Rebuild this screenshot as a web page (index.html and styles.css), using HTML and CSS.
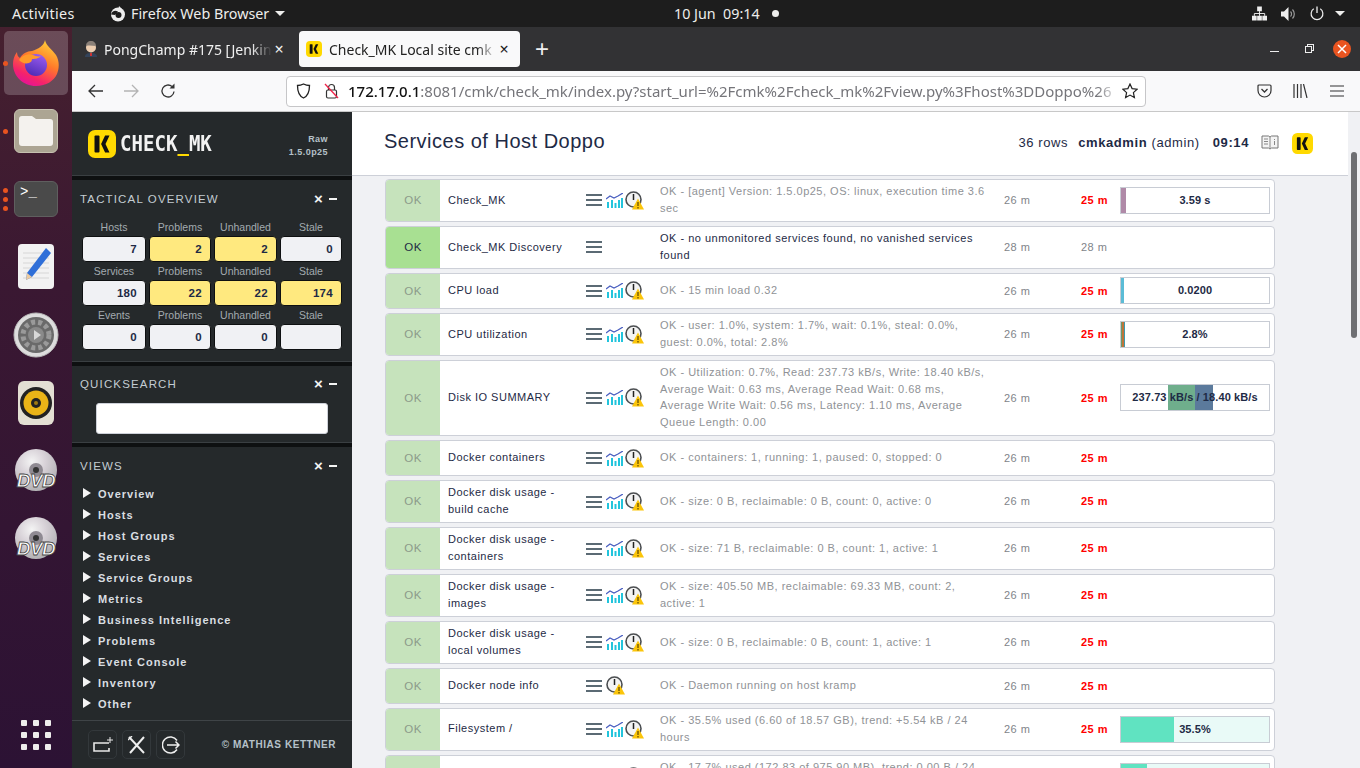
FILE: index.html
```html
<!DOCTYPE html>
<html lang="en">
<head>
    <meta charset="UTF-8">
    <title>Check_MK Local site cmk</title>
    <link rel="stylesheet" href="styles.css">
</head>
<body>
    <svg class="defs" width="0" height="0">
        <defs>
            <linearGradient id="fxBody" x1="0.8" y1="0" x2="0.3" y2="1">
                <stop offset="0" stop-color="#ffd53a"/>
                <stop offset="0.45" stop-color="#ff7a2a"/>
                <stop offset="0.8" stop-color="#f5236b"/>
                <stop offset="1" stop-color="#e3129a"/>
            </linearGradient>
            <linearGradient id="fxBall" x1="0.7" y1="0" x2="0.3" y2="1">
                <stop offset="0" stop-color="#9a5cf0"/>
                <stop offset="1" stop-color="#4d2bb5"/>
            </linearGradient>
            <radialGradient id="disc" cx="0.4" cy="0.3" r="0.8">
                <stop offset="0" stop-color="#f4f4f4"/>
                <stop offset="0.4" stop-color="#d8d2d8"/>
                <stop offset="1" stop-color="#a9a9ab"/>
            </radialGradient>
            <symbol id="ico-k" viewBox="0 0 28 28">
                <rect width="28" height="28" rx="7" fill="#ffd900"/>
                <rect x="6.5" y="5.5" width="5" height="17" rx="1" fill="#111"/>
                <path d="M21.500 5.500h-4.400l-4 8.500 4 8.500h4.400l-4-8.500z" fill="#111"/>
            </symbol>
            <symbol id="ico-menu" viewBox="0 0 16 12">
                <path d="M0 1h16M0 6h16M0 11h16" stroke="#5b6a74" stroke-width="2"/>
            </symbol>
            <symbol id="ico-graph" viewBox="0 0 17 15">
                <path d="M1 15V9h2v6zM5 15V7h2v8zM8.500 15V10h2v5zM12 15V7h2v8zM15 15V5h2v10z" fill="#22c4dc"/>
                <path d="M0 6l4-3 4 2 4-2 5-3" fill="none" stroke="#4a5fc0" stroke-width="1.300"/>
            </symbol>
            <symbol id="ico-stale" viewBox="0 0 19 19">
                <circle cx="8.500" cy="8.500" r="7.500" fill="#f4f4f4" stroke="#4c4f52" stroke-width="1.600"/>
                <path d="M8.500 3v6" stroke="#222" stroke-width="1.500"/>
                <path d="M13 7.500l6 11H7z" fill="#fbc50a"/>
                <path d="M13 11v4M13 16v1.400" stroke="#5a4400" stroke-width="1.200"/>
            </symbol>
        </defs>
    </svg>

    <div class="topbar">
        <span class="activities">Activities</span>
        <div class="appmenu">
            <svg class="appmenu-icon" width="16" height="16" viewBox="0 0 16 16"><circle cx="8" cy="8.500" r="7" fill="#eee"/><circle cx="8.500" cy="9" r="3" fill="#1d1d1d"/><path d="M9 0l3 3-4 2z" fill="#eee"/><path d="M1 8.500C2 5 5 4 8 5.500L5 9z" fill="#1d1d1d"/></svg>
            <span>Firefox Web Browser</span>
            <span class="caret"></span>
        </div>
        <div class="clock">
            <span>10 Jun&nbsp; 09:14</span>
            <span class="clock-dot"></span>
        </div>
        <div class="tray">
            <svg width="15" height="15" viewBox="0 0 16 15"><path d="M5.500 0h5v5h-5zM0 10h5v5H0zM5.500 10h5v5h-5zM11 10h5v5h-5z" fill="#eee"/><path d="M8 5v5M2.500 10V7.500h11V10" fill="none" stroke="#eee"/></svg>
            <svg width="15" height="14" viewBox="0 0 15 14"><path d="M0 4.500h3L7.500 0v14L3 9.500H0z" fill="#eee"/><path d="M9.500 4.500a3.500 3.500 0 0 1 0 5M11.500 2.500a6.500 6.500 0 0 1 0 9" fill="none" stroke="#999" stroke-width="1.200"/></svg>
            <svg width="14" height="15" viewBox="0 0 15 15"><path d="M7.500 0v7" stroke="#eee" stroke-width="1.400"/><path d="M4 2.500a6.300 6.300 0 1 0 7 0" fill="none" stroke="#eee" stroke-width="1.300"/></svg>
            <span class="caret"></span>
        </div>
    </div>

    <div class="desktop">
        <nav class="dock">
            <div class="dock-item active">
                <span class="run-dot one"></span>
                <svg width="48" height="48" viewBox="0 0 48 48">
                    <path d="M33 1c1 6 7 9 11 15 4 7 3 14 1 19-3 7-11 12-21 12C11 47 1 37 1 25c0-4 1-8 4-12 0 3 1 5 3 6 2-4 7-7 12-7 6-2 12-5 13-11z" fill="url(#fxBody)"/>
                    <circle cx="24" cy="26" r="11" fill="url(#fxBall)"/>
                    <path d="M7 21c3-5 9-7 14-5 3 1 5 2 8 1-3 3-7 3-9 3 0 2-1 3-3 4-4 1-7 0-10-3z" fill="#ff9a2a"/>
                </svg>
            </div>
            <div class="dock-item">
                <span class="run-dot one"></span>
                <div class="tile tile-files">
                    <svg width="34" height="30" viewBox="0 0 34 30"><path d="M3 0h10l4 3h14a3 3 0 0 1 3 3v21a3 3 0 0 1-3 3H3a3 3 0 0 1-3-3V3a3 3 0 0 1 3-3z" fill="#f4f2ee"/></svg>
                </div>
            </div>
            <div class="dock-item">
                <span class="run-dot three"></span>
                <span class="run-dot one"></span>
                <span class="run-dot five"></span>
                <div class="tile tile-term"><span>&gt;_</span></div>
            </div>
            <div class="dock-item">
                <svg width="38" height="46" viewBox="0 0 38 46">
                    <rect width="36" height="45" x="1" rx="4" fill="#f2f2f2"/>
                    <path d="M6 9h26M6 14h26M6 19h26M6 24h26M6 29h26M6 34h26" stroke="#d6d6d6"/>
                    <path d="M29 4l5 5-19 24-6 3 1-7z" fill="#2f6fd8"/>
                    <path d="M10 29l5 4-6 3z" fill="#eccba0"/>
                </svg>
            </div>
            <div class="dock-item">
                <svg width="46" height="46" viewBox="0 0 46 46">
                    <circle cx="23" cy="23" r="22" fill="#ddd" stroke="#bbb"/>
                    <circle cx="23" cy="23" r="18" fill="#6a6a6a"/>
                    <circle cx="23" cy="23" r="13" fill="none" stroke="#9a9a9a" stroke-width="5" stroke-dasharray="4 3"/>
                    <circle cx="23" cy="23" r="8" fill="#8a8a8a"/>
                    <path d="M21 18l7 5-7 5z" fill="#d8d8d8"/>
                </svg>
            </div>
            <div class="dock-item">
                <div class="tile tile-sound">
                    <svg width="32" height="32" viewBox="0 0 32 32">
                        <circle cx="16" cy="16" r="16" fill="#222"/>
                        <circle cx="16" cy="16" r="12.500" fill="#eab417"/>
                        <circle cx="16" cy="16" r="5" fill="#222"/>
                        <circle cx="16" cy="16" r="2" fill="#a07a10"/>
                    </svg>
                </div>
            </div>
            <div class="dock-item">
                <svg width="44" height="44" viewBox="0 0 44 44">
                    <circle cx="22" cy="21" r="21" fill="url(#disc)"/>
                    <circle cx="22" cy="21" r="7" fill="#8f8a92"/>
                    <circle cx="22" cy="21" r="3" fill="#333"/>
                    <text class="dvd-text" x="22" y="38">DVD</text>
                </svg>
            </div>
            <div class="dock-item">
                <svg width="44" height="44" viewBox="0 0 44 44">
                    <circle cx="22" cy="21" r="21" fill="url(#disc)"/>
                    <circle cx="22" cy="21" r="7" fill="#8f8a92"/>
                    <circle cx="22" cy="21" r="3" fill="#333"/>
                    <text class="dvd-text" x="22" y="38">DVD</text>
                </svg>
            </div>
            <div class="dock-apps">
                <span></span><span></span><span></span>
                <span></span><span></span><span></span>
                <span></span><span></span><span></span>
            </div>
        </nav>

        <div class="browser">
            <div class="tabbar">
                <div class="tab">
                    <svg class="tab-icon" width="14" height="16" viewBox="0 0 14 16"><path d="M1 16c0-3 2-4 6-4s6 1 6 4z" fill="#33435a"/><circle cx="7" cy="6.500" r="5" fill="#eccdb0"/><path d="M2 5c0-3 2-5 5-5s5 2 5 5c-3 0-6-1-10 0z" fill="#8a8078"/><path d="M6 12h2v3H6z" fill="#c33"/></svg>
                    <span class="tab-title">PongChamp #175 [Jenkin</span>
                    <span class="tab-close">&#215;</span>
                </div>
                <div class="tab tab-active">
                    <svg class="tab-icon-k" width="16" height="16"><use href="#ico-k"/></svg>
                    <span class="tab-title">Check_MK Local site cmk</span>
                    <span class="tab-close">&#215;</span>
                </div>
                <span class="tab-new">+</span>
                <div class="winctl">
                    <span class="win-min"></span>
                    <span class="win-max"></span>
                    <span class="win-close">
                        <svg width="10" height="10" viewBox="0 0 10 10"><path d="M1 1l8 8M9 1l-8 8" stroke="#fff" stroke-width="1.500"/></svg>
                    </span>
                </div>
            </div>
            <div class="toolbar">
                <svg class="tb-back" width="16" height="14" viewBox="0 0 16 14"><path d="M15 7H1.500M7 1L1 7l6 6" fill="none" stroke="#333" stroke-width="1.300"/></svg>
                <svg class="tb-fwd" width="16" height="14" viewBox="0 0 16 14"><path d="M1 7h13.500M9 1l6 6-6 6" fill="none" stroke="#b4b4b4" stroke-width="1.300"/></svg>
                <svg class="tb-reload" width="16" height="16" viewBox="0 0 16 16"><path d="M14 8.500A6 6 0 1 1 12 3.500" fill="none" stroke="#333" stroke-width="1.300"/><path d="M14.500 0.500v5h-5z" fill="#333"/></svg>
                <div class="urlbar">
                    <svg class="url-shield" width="15" height="16" viewBox="0 0 15 16"><path d="M7.500 1c2 1 4 1.500 6 1.500 0 6-1.500 10.500-6 12.500C3 13 1.500 8.500 1.500 2.500c2 0 4-.5 6-1.500z" fill="none" stroke="#222" stroke-width="1.300"/></svg>
                    <svg class="url-lock" width="15" height="16" viewBox="0 0 15 16"><rect x="2.500" y="7" width="10" height="8" rx="1.500" fill="none" stroke="#333" stroke-width="1.200"/><path d="M4.500 7V4.500a3 3 0 0 1 6 0V7" fill="none" stroke="#333" stroke-width="1.200"/><path d="M1 1l13 14" stroke="#f0234a" stroke-width="1.300"/></svg>
                    <span class="url-text"><b>172.17.0.1</b>:8081/cmk/check_mk/index.py?start_url=%2Fcmk%2Fcheck_mk%2Fview.py%3Fhost%3DDoppo%26</span>
                    <svg class="url-star" width="16" height="16" viewBox="0 0 16 16"><path d="M8 1l2.100 4.600 5 .6-3.700 3.400 1 5L8 12.100 3.600 14.600l1-5L.9 6.200l5-.6z" fill="none" stroke="#222" stroke-width="1.200"/></svg>
                </div>
                <svg class="tb-pocket" width="15" height="14" viewBox="0 0 15 14"><path d="M2 1h11a1 1 0 0 1 1 1v4.500a6.500 6.500 0 0 1-13 0V2a1 1 0 0 1 1-1z" fill="none" stroke="#333" stroke-width="1.200"/><path d="M4.500 5l3 3 3-3" fill="none" stroke="#333" stroke-width="1.300"/></svg>
                <svg class="tb-library" width="15" height="14" viewBox="0 0 15 14"><path d="M1 0v14M4.500 0v14M8 0v14M10.500 0l3.500 14" fill="none" stroke="#333" stroke-width="1.200"/></svg>
                <svg class="tb-menu" width="14" height="12" viewBox="0 0 14 12"><path d="M0 1h14M0 6h14M0 11h14" stroke="#333" stroke-width="1.200"/></svg>
            </div>

            <div class="page">
                <aside class="sidebar">
                    <div class="side-head">
                        <svg width="28" height="28"><use href="#ico-k"/></svg>
                        <span class="brand">CHECK<i>_</i>MK</span>
                        <div class="edition">Raw<br>1.5.0p25</div>
                    </div>

                    <section class="snapin snapin-tactical">
                        <div class="snap-title"><span>TACTICAL OVERVIEW</span><span class="snap-ctl"><b>&#215;</b><i></i></span></div>
                        <div class="tactical">
                            <span>Hosts</span><span>Problems</span><span>Unhandled</span><span>Stale</span>
                            <div>7</div><div class="warn">2</div><div class="warn">2</div><div>0</div>
                            <span>Services</span><span>Problems</span><span>Unhandled</span><span>Stale</span>
                            <div>180</div><div class="warn">22</div><div class="warn">22</div><div class="warn">174</div>
                            <span>Events</span><span>Problems</span><span>Unhandled</span><span>Stale</span>
                            <div>0</div><div>0</div><div>0</div><div></div>
                        </div>
                    </section>

                    <section class="snapin snapin-search">
                        <div class="snap-title"><span>QUICKSEARCH</span><span class="snap-ctl"><b>&#215;</b><i></i></span></div>
                        <input class="search" type="text">
                    </section>

                    <section class="snapin snapin-views">
                        <div class="snap-title"><span>VIEWS</span><span class="snap-ctl"><b>&#215;</b><i></i></span></div>
                        <ul class="views">
                            <li>Overview</li>
                            <li>Hosts</li>
                            <li>Host Groups</li>
                            <li>Services</li>
                            <li>Service Groups</li>
                            <li>Metrics</li>
                            <li>Business Intelligence</li>
                            <li>Problems</li>
                            <li>Event Console</li>
                            <li>Inventory</li>
                            <li>Other</li>
                        </ul>
                    </section>

                    <div class="side-foot">
                        <span class="foot-btn"><svg width="20" height="16" viewBox="0 0 20 16"><path d="M16 6H1v8h15v-3" fill="none" stroke="#e8e8e8" stroke-width="1.600"/><path d="M17 0v6M14 3h6" stroke="#e8e8e8"/></svg></span>
                        <span class="foot-btn"><svg width="18" height="18" viewBox="0 0 18 18"><path d="M1 1l15 16M16 1L2 17" stroke="#eee" stroke-width="2"/><path d="M0 4l4-4" stroke="#eee" stroke-width="1.500"/></svg></span>
                        <span class="foot-btn"><svg width="18" height="18" viewBox="0 0 18 18"><path d="M15 4.500a8 8 0 1 0 0 9" fill="none" stroke="#eee" stroke-width="1.500"/><path d="M5 9h12M13.500 5.500L17 9l-3.500 3.500" fill="none" stroke="#eee" stroke-width="1.500"/></svg></span>
                        <span class="copyright">&copy; MATHIAS KETTNER</span>
                    </div>
                </aside>

                <main class="main">
                    <div class="main-col">
                        <header class="main-head">
                            <h1>Services of Host Doppo</h1>
                            <div class="head-info">
                                <span class="rows-count">36 rows</span>
                                <span class="user"><b>cmkadmin</b> (admin)</span>
                                <b class="head-time">09:14</b>
                                <svg class="head-book" width="18" height="15" viewBox="0 0 18 15"><path d="M1 1h6.500L9 2l1.500-1H17v12h-6.500L9 14l-1.500-1H1z" fill="#f4f4f4" stroke="#777"/><path d="M9 2v12M13.500 4v1M13.500 6v4M3 4h4M3 6.500h4M3 9h4" stroke="#888"/></svg>
                                <svg class="head-logo" width="21" height="21"><use href="#ico-k"/></svg>
                            </div>
                        </header>

                        <div class="services">
                            <div class="svc">
                                <div class="state">OK</div>
                                <div class="name">Check_MK</div>
                                <div class="icons"><svg class="i-menu"><use href="#ico-menu"/></svg><svg class="i-graph"><use href="#ico-graph"/></svg><svg class="i-stale"><use href="#ico-stale"/></svg></div>
                                <div class="output">OK - [agent] Version: 1.5.0p25, OS: linux, execution time 3.6 sec</div>
                                <div class="age">26 m</div>
                                <div class="checked">25 m</div>
                                <div class="perf"><div class="perf-bar"><i class="c-purple" style="width:5px"></i><span>3.59 s</span></div></div>
                            </div>
                            <div class="svc svc-fresh">
                                <div class="state">OK</div>
                                <div class="name">Check_MK Discovery</div>
                                <div class="icons"><svg class="i-menu"><use href="#ico-menu"/></svg></div>
                                <div class="output">OK - no unmonitored services found, no vanished services found</div>
                                <div class="age">28 m</div>
                                <div class="checked">28 m</div>
                                <div class="perf"></div>
                            </div>
                            <div class="svc">
                                <div class="state">OK</div>
                                <div class="name">CPU load</div>
                                <div class="icons"><svg class="i-menu"><use href="#ico-menu"/></svg><svg class="i-graph"><use href="#ico-graph"/></svg><svg class="i-stale"><use href="#ico-stale"/></svg></div>
                                <div class="output">OK - 15 min load 0.32</div>
                                <div class="age">26 m</div>
                                <div class="checked">25 m</div>
                                <div class="perf"><div class="perf-bar"><i class="c-cyan" style="width:3px"></i><span>0.0200</span></div></div>
                            </div>
                            <div class="svc">
                                <div class="state">OK</div>
                                <div class="name">CPU utilization</div>
                                <div class="icons"><svg class="i-menu"><use href="#ico-menu"/></svg><svg class="i-graph"><use href="#ico-graph"/></svg><svg class="i-stale"><use href="#ico-stale"/></svg></div>
                                <div class="output">OK - user: 1.0%, system: 1.7%, wait: 0.1%, steal: 0.0%, guest: 0.0%, total: 2.8%</div>
                                <div class="age">26 m</div>
                                <div class="checked">25 m</div>
                                <div class="perf"><div class="perf-bar"><i class="c-green" style="width:1px"></i><i class="c-orange" style="width:2px"></i><i class="c-teal" style="width:1px"></i><span>2.8%</span></div></div>
                            </div>
                            <div class="svc">
                                <div class="state">OK</div>
                                <div class="name">Disk IO SUMMARY</div>
                                <div class="icons"><svg class="i-menu"><use href="#ico-menu"/></svg><svg class="i-graph"><use href="#ico-graph"/></svg><svg class="i-stale"><use href="#ico-stale"/></svg></div>
                                <div class="output">OK - Utilization: 0.7%, Read: 237.73 kB/s, Write: 18.40 kB/s, Average Wait: 0.63 ms, Average Read Wait: 0.68 ms, Average Write Wait: 0.56 ms, Latency: 1.10 ms, Average Queue Length: 0.00</div>
                                <div class="age">26 m</div>
                                <div class="checked">25 m</div>
                                <div class="perf"><div class="perf-bar perf-io"><i class="c-read" style="width:27px"></i><i class="c-write" style="width:18px"></i><span>237.73 kB/s / 18.40 kB/s</span></div></div>
                            </div>
                            <div class="svc">
                                <div class="state">OK</div>
                                <div class="name">Docker containers</div>
                                <div class="icons"><svg class="i-menu"><use href="#ico-menu"/></svg><svg class="i-graph"><use href="#ico-graph"/></svg><svg class="i-stale"><use href="#ico-stale"/></svg></div>
                                <div class="output">OK - containers: 1, running: 1, paused: 0, stopped: 0</div>
                                <div class="age">26 m</div>
                                <div class="checked">25 m</div>
                                <div class="perf"></div>
                            </div>
                            <div class="svc">
                                <div class="state">OK</div>
                                <div class="name">Docker disk usage - build cache</div>
                                <div class="icons"><svg class="i-menu"><use href="#ico-menu"/></svg><svg class="i-graph"><use href="#ico-graph"/></svg><svg class="i-stale"><use href="#ico-stale"/></svg></div>
                                <div class="output">OK - size: 0 B, reclaimable: 0 B, count: 0, active: 0</div>
                                <div class="age">26 m</div>
                                <div class="checked">25 m</div>
                                <div class="perf"></div>
                            </div>
                            <div class="svc">
                                <div class="state">OK</div>
                                <div class="name">Docker disk usage - containers</div>
                                <div class="icons"><svg class="i-menu"><use href="#ico-menu"/></svg><svg class="i-graph"><use href="#ico-graph"/></svg><svg class="i-stale"><use href="#ico-stale"/></svg></div>
                                <div class="output">OK - size: 71 B, reclaimable: 0 B, count: 1, active: 1</div>
                                <div class="age">26 m</div>
                                <div class="checked">25 m</div>
                                <div class="perf"></div>
                            </div>
                            <div class="svc">
                                <div class="state">OK</div>
                                <div class="name">Docker disk usage - images</div>
                                <div class="icons"><svg class="i-menu"><use href="#ico-menu"/></svg><svg class="i-graph"><use href="#ico-graph"/></svg><svg class="i-stale"><use href="#ico-stale"/></svg></div>
                                <div class="output">OK - size: 405.50 MB, reclaimable: 69.33 MB, count: 2, active: 1</div>
                                <div class="age">26 m</div>
                                <div class="checked">25 m</div>
                                <div class="perf"></div>
                            </div>
                            <div class="svc">
                                <div class="state">OK</div>
                                <div class="name">Docker disk usage - local volumes</div>
                                <div class="icons"><svg class="i-menu"><use href="#ico-menu"/></svg><svg class="i-graph"><use href="#ico-graph"/></svg><svg class="i-stale"><use href="#ico-stale"/></svg></div>
                                <div class="output">OK - size: 0 B, reclaimable: 0 B, count: 1, active: 1</div>
                                <div class="age">26 m</div>
                                <div class="checked">25 m</div>
                                <div class="perf"></div>
                            </div>
                            <div class="svc">
                                <div class="state">OK</div>
                                <div class="name">Docker node info</div>
                                <div class="icons"><svg class="i-menu"><use href="#ico-menu"/></svg><svg class="i-stale"><use href="#ico-stale"/></svg></div>
                                <div class="output">OK - Daemon running on host kramp</div>
                                <div class="age">26 m</div>
                                <div class="checked">25 m</div>
                                <div class="perf"></div>
                            </div>
                            <div class="svc">
                                <div class="state">OK</div>
                                <div class="name">Filesystem /</div>
                                <div class="icons"><svg class="i-menu"><use href="#ico-menu"/></svg><svg class="i-graph"><use href="#ico-graph"/></svg><svg class="i-stale"><use href="#ico-stale"/></svg></div>
                                <div class="output">OK - 35.5% used (6.60 of 18.57 GB), trend: +5.54 kB / 24 hours</div>
                                <div class="age">26 m</div>
                                <div class="checked">25 m</div>
                                <div class="perf"><div class="perf-bar perf-fs"><i class="c-fs" style="width:35.5%"></i><span>35.5%</span></div></div>
                            </div>
                            <div class="svc">
                                <div class="state">OK</div>
                                <div class="name">Filesystem /boot</div>
                                <div class="icons"><svg class="i-menu"><use href="#ico-menu"/></svg><svg class="i-graph"><use href="#ico-graph"/></svg><svg class="i-stale"><use href="#ico-stale"/></svg></div>
                                <div class="output">OK - 17.7% used (172.83 of 975.90 MB), trend: 0.00 B / 24 hours</div>
                                <div class="age">26 m</div>
                                <div class="checked">25 m</div>
                                <div class="perf"><div class="perf-bar perf-fs"><i class="c-fs" style="width:17.7%"></i><span>17.7%</span></div></div>
                            </div>
                        </div>
                    </div>
                    <div class="scrollbar"><span></span></div>
                </main>
            </div>
        </div>
    </div>
</body>
</html>
```

FILE: styles.css
```css
* {
    box-sizing: border-box;
}
html, body {
    margin: 0;
    height: 768px;
    overflow: hidden;
}
body {
    font-family: "Liberation Sans", Arial, sans-serif;
    display: flex;
    flex-direction: column;
    background-color: #1d1d1d;
}
.defs {
    position: absolute;
}

/* gnome top bar */
.topbar {
    height: 27px;
    flex: none;
    display: flex;
    align-items: center;
    position: relative;
    background-color: #1d1d1d;
    color: #eeeeec;
    font-family: "Noto Sans", sans-serif;
    font-size: 14.300px;
    padding-left: 12px;
}
.activities {
    width: 98px;
    letter-spacing: 0.3px;
}
.appmenu {
    display: flex;
    align-items: center;
}
.appmenu-icon {
    margin-right: 5px;
}
.caret {
    width: 0;
    height: 0;
    border-left: 5px solid transparent;
    border-right: 5px solid transparent;
    border-top: 5px solid #eeeeec;
    margin-left: 6px;
}
.clock {
    position: absolute;
    left: 674px;
    top: 0;
    height: 27px;
    display: flex;
    align-items: center;
}
.clock-dot {
    width: 7px;
    height: 7px;
    border-radius: 50%;
    background-color: #eeeeec;
    margin-left: 12px;
}
.tray {
    margin-left: auto;
    padding-right: 15px;
    display: flex;
    align-items: center;
    gap: 14px;
}
.tray .caret {
    margin-left: -3px;
}

/* dock */
.desktop {
    flex: 1;
    display: flex;
    min-height: 0;
}
.dock {
    width: 72px;
    flex: none;
    display: flex;
    flex-direction: column;
    align-items: center;
    gap: 4px;
    padding-top: 4px;
    background: linear-gradient(180deg, #46202f 0%, #3a1832 35%, #2c1234 100%);
}
.dock-item {
    width: 64px;
    height: 64px;
    flex: none;
    display: flex;
    align-items: center;
    justify-content: center;
    position: relative;
    border-radius: 5px;
}
.dock-item.active {
    background-color: rgba(255, 255, 255, 0.2);
}
.run-dot {
    position: absolute;
    left: -1px;
    width: 5px;
    height: 5px;
    border-radius: 50%;
    background-color: #e95420;
}
.run-dot.one {
    top: 30px;
}
.run-dot.three {
    top: 21px;
}
.run-dot.five {
    top: 39px;
}
.tile {
    display: flex;
    align-items: center;
    justify-content: center;
    border-radius: 6px;
}
.tile-files {
    width: 44px;
    height: 44px;
    background-color: #aca593;
    border: 1px solid #c6c1b0;
}
.tile-term {
    width: 44px;
    height: 36px;
    background-color: #4a4a4a;
    border: 1px solid #5f5f5f;
    color: #fff;
    font-family: "Liberation Mono", monospace;
    font-size: 14px;
    align-items: flex-start;
    justify-content: flex-start;
    padding: 2px 5px;
}
.tile-sound {
    width: 36px;
    height: 44px;
    background-color: #e3dfd3;
}
.dvd-text {
    font-family: "Liberation Sans", sans-serif;
    font-weight: bold;
    font-style: italic;
    font-size: 19px;
    text-anchor: middle;
    fill: #fff;
    stroke: #444;
    stroke-width: 0.8px;
    letter-spacing: -0.5px;
}
.dock-apps {
    margin-top: auto;
    margin-bottom: 18px;
    display: grid;
    grid-template-columns: repeat(3, 6px);
    gap: 6px;
}
.dock-apps span {
    width: 6px;
    height: 6px;
    border-radius: 1px;
    background-color: #eeeeec;
}

/* firefox */
.browser {
    flex: 1;
    min-width: 0;
    display: flex;
    flex-direction: column;
}
.tabbar {
    height: 44px;
    flex: none;
    display: flex;
    align-items: center;
    background-color: #323234;
}
.tab {
    width: 223px;
    height: 36px;
    display: flex;
    align-items: center;
    padding-left: 12px;
    color: #f0f0f0;
    font-family: "Noto Sans", sans-serif;
    font-size: 14px;
    border-radius: 4px;
    margin-right: 4px;
}
.tab-active {
    width: 221px;
    padding-left: 7px;
    background-color: #f9f9fa;
    color: #222;
}
.tab-icon {
    margin-right: 6px;
    flex: none;
}
.tab-icon-k {
    margin-right: 7px;
    flex: none;
}
.tab-title {
    width: 168px;
    white-space: nowrap;
    overflow: hidden;
    -webkit-mask-image: linear-gradient(90deg, #000 88%, transparent);
    mask-image: linear-gradient(90deg, #000 88%, transparent);
}
.tab-close {
    font-size: 16px;
    width: 14px;
    text-align: center;
}
.tab-new {
    color: #f0f0f0;
    font-family: "Liberation Sans", sans-serif;
    font-size: 24px;
    font-weight: normal;
    margin-left: 11px;
}
.winctl {
    margin-left: auto;
    display: flex;
    align-items: center;
    padding-right: 9px;
}
.win-min {
    width: 9px;
    height: 1px;
    background-color: #eee;
    margin-top: 5px;
    margin-right: 26px;
}
.win-max {
    width: 7px;
    height: 7px;
    border: 1px solid #eee;
    box-shadow: 2px -2px 0 -1px #323234, 2px -2px 0 0 #eee;
    margin-right: 21px;
}
.win-close {
    width: 18px;
    height: 18px;
    border-radius: 50%;
    background-color: #e95420;
    display: flex;
    align-items: center;
    justify-content: center;
}
.toolbar {
    height: 41px;
    flex: none;
    display: flex;
    align-items: center;
    background-color: #f9f9fa;
    border-bottom: 1px solid #c8c8c8;
    padding-left: 16px;
}
.tb-fwd {
    margin-left: 19px;
}
.tb-reload {
    margin-left: 21px;
}
.urlbar {
    width: 860px;
    height: 31px;
    margin-left: 110px;
    display: flex;
    align-items: center;
    background-color: #fff;
    border: 1px solid #c6c6c8;
    border-radius: 4px;
    padding-left: 9px;
}
.url-lock {
    margin-left: 13px;
}
.url-text {
    width: 772px;
    margin-left: 9px;
    margin-right: 2px;
    font-family: "Noto Sans", sans-serif;
    font-size: 15px;
    color: #75757a;
    white-space: nowrap;
    overflow: hidden;
    -webkit-mask-image: linear-gradient(90deg, #000 97%, transparent);
    mask-image: linear-gradient(90deg, #000 97%, transparent);
}
.url-text b {
    font-weight: 500;
    color: #111;
}
.tb-pocket {
    margin-left: 111px;
}
.tb-library {
    margin-left: 21px;
}
.tb-menu {
    margin-left: 22px;
}

/* check_mk page */
.page {
    flex: 1;
    min-height: 0;
    display: flex;
}
.sidebar {
    width: 280px;
    flex: none;
    display: flex;
    flex-direction: column;
    background-color: #25292b;
    color: #c6ced4;
}
.side-head {
    height: 64px;
    flex: none;
    display: flex;
    align-items: center;
    padding: 0 24px 0 16px;
}
.brand {
    font-family: "DejaVu Sans Mono", monospace;
    font-weight: bold;
    font-size: 20.500px;
    color: #f2f2f2;
    margin-left: 4px;
    transform: scaleX(0.93);
    transform-origin: left center;
    margin-right: -10px;
}
.brand i {
    font-style: normal;
    color: #ffd900;
}
.edition {
    margin: 3px 0 0 auto;
    text-align: right;
    font-size: 9px;
    font-weight: bold;
    line-height: 13px;
    letter-spacing: 0.45px;
    color: #b5c1c9;
}
.snapin {
    border-top: 4px solid #0e1011;
    box-shadow: 0 -1px 0 #3a3f42;
    flex: none;
}
.snap-title {
    height: 38px;
    display: flex;
    align-items: center;
    justify-content: space-between;
    padding: 0 15px 0 8px;
    font-size: 11.500px;
    letter-spacing: 1.150px;
    color: #c3ccd2;
}
.snap-ctl {
    display: flex;
    align-items: center;
    gap: 5px;
}
.snap-ctl b {
    color: #f4f4f4;
    font-size: 15px;
    line-height: 12px;
}
.snap-ctl i {
    width: 8px;
    height: 2px;
    background-color: #f4f4f4;
}
.tactical {
    display: grid;
    grid-template-columns: 64px 62px 63px 62px;
    grid-auto-rows: 18px 26px;
    column-gap: 3px;
    margin: 0 0 12px 10px;
    text-align: center;
    font-size: 10.500px;
    color: #a3abb0;
}
.tactical span {
    line-height: 18px;
}
.tactical div {
    background-color: #f0f1f4;
    border: 1px solid #0e1011;
    border-radius: 4px;
    text-align: right;
    padding-right: 8px;
    font-size: 11.500px;
    font-weight: bold;
    line-height: 24px;
    letter-spacing: 0.3px;
    color: #1e2a45;
}
.tactical div.warn {
    background-color: #ffe97f;
}
.snapin-search {
    height: 81px;
}
.snapin-search .snap-title {
    height: 36px;
}
.search {
    display: block;
    width: 232px;
    height: 31px;
    margin: 1px 0 0 24px;
    background-color: #fff;
    border: 1px solid #cdd0d8;
    border-radius: 3px;
}
.snapin-views {
    padding-bottom: 4px;
}
.views {
    list-style: none;
    margin: -2px 0 0;
    padding: 0 0 0 11px;
}
.views li {
    height: 21px;
    display: flex;
    align-items: center;
    font-size: 11px;
    font-weight: bold;
    letter-spacing: 1px;
    color: #d9dee1;
}
.views li::before {
    content: "";
    width: 0;
    height: 0;
    border-left: 8px solid #f4f4f4;
    border-top: 5px solid transparent;
    border-bottom: 5px solid transparent;
    margin: -2px 7px 0 0;
}
.side-foot {
    margin-top: auto;
    height: 48px;
    flex: none;
    display: flex;
    align-items: center;
    border-top: 1px solid #3f4447;
    padding: 0 16px;
    gap: 5px;
}
.foot-btn {
    width: 29px;
    height: 29px;
    display: flex;
    align-items: center;
    justify-content: center;
    border: 1px solid #33383b;
    border-radius: 5px;
}
.copyright {
    margin-left: auto;
    font-size: 10px;
    font-weight: bold;
    letter-spacing: 0.55px;
    color: #b5c1c9;
}
.main {
    flex: 1;
    min-width: 0;
    display: flex;
    background-color: #f0f1f4;
}
.main-col {
    width: 996px;
    flex: none;
    display: flex;
    flex-direction: column;
}
.main-head {
    height: 64px;
    flex: none;
    display: flex;
    align-items: center;
    background-color: #fff;
    border-bottom: 1px solid #cdd0d8;
    padding: 0 35px 4px 32px;
}
.main-head h1 {
    margin: 0;
    font-size: 20px;
    font-weight: normal;
    letter-spacing: 0.5px;
    color: #1e2a45;
}
.head-info {
    margin: 2px 0 0 auto;
    display: flex;
    align-items: center;
    font-size: 13px;
    letter-spacing: 0.600px;
    color: #1e2a45;
}
.user {
    margin-left: 10px;
}
.head-time {
    margin-left: 13px;
}
.head-book {
    margin-left: 12px;
}
.head-logo {
    margin: 2px 0 0 13px;
}
.services {
    display: flex;
    flex-direction: column;
    gap: 4px;
    padding: 3px 0 0 33px;
}
.svc {
    width: 890px;
    min-height: 36px;
    flex: none;
    display: grid;
    grid-template-columns: 54px 138px 74px 344px 77px 39px 1fr;
    align-items: center;
    background-color: #fff;
    border: 1px solid #cdd0d8;
    border-radius: 4px;
    overflow: hidden;
    font-size: 11px;
    letter-spacing: 0.500px;
    line-height: 16.670px;
    color: #1e2a45;
}
.state {
    align-self: stretch;
    display: flex;
    align-items: center;
    justify-content: center;
    background-color: #c6e3bc;
    color: #8c9a8a;
    font-size: 11.500px;
}
.svc-fresh .state {
    background-color: #a8e092;
    color: #1e2a45;
}
.name {
    padding: 3.300px 8px 4.300px;
}
.icons {
    display: flex;
    align-items: center;
    padding-left: 8px;
}
.i-menu {
    width: 16px;
    height: 12px;
    margin-right: 4px;
}
.i-graph {
    width: 17px;
    height: 15px;
    margin-right: 2px;
}
.i-stale {
    width: 19px;
    height: 19px;
}
.output {
    padding: 3.300px 8px 4.300px;
    color: #8f9296;
}
.svc-fresh .output {
    color: #1e2a45;
}
.age {
    padding-left: 8px;
    color: #7f848a;
}
.svc-fresh .checked {
    color: #7f848a;
    font-weight: normal;
}
.checked {
    padding-left: 8px;
    white-space: nowrap;
    color: #f00;
    font-weight: bold;
}
.perf {
    padding-left: 8px;
}
.perf-bar {
    width: 150px;
    height: 27px;
    position: relative;
    display: flex;
    background-color: #fff;
    border: 1px solid #c8ccd4;
}
.perf-bar i {
    display: block;
    height: 100%;
}
.perf-bar span {
    position: absolute;
    left: 0;
    right: 0;
    top: 0;
    line-height: 25px;
    text-align: center;
    font-weight: bold;
    letter-spacing: 0.1px;
}
.perf-io {
    padding-left: 47px;
}
.perf-fs {
    background-color: #e9faf7;
}
.c-purple { background-color: #b08aa8; }
.c-cyan { background-color: #5bbcd6; }
.c-green { background-color: #6a9a6a; }
.c-orange { background-color: #c0743a; }
.c-teal { background-color: #3a9ab0; }
.c-read { background-color: #6fae8c; }
.c-write { background-color: #5b7a9c; }
.c-fs { background-color: #60e3c1; }
.scrollbar {
    flex: 1;
    padding-top: 40px;
    display: flex;
    justify-content: center;
    align-items: flex-start;
}
.scrollbar span {
    width: 6px;
    height: 186px;
    border-radius: 3px;
    background-color: #6e6f72;
}
```
